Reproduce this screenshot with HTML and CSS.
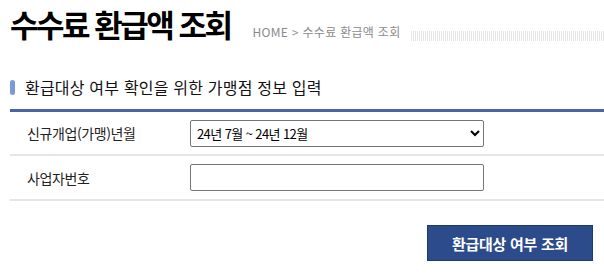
FILE: index.html
```html
<!DOCTYPE html>
<html lang="ko">
<head>
<meta charset="utf-8">
<link rel="stylesheet" href="styles.css">
</head>
<body>
<div class="page">
  <div class="header">
    <h1 class="title">수수료 환급액 조회</h1>
    <div class="crumb">HOME <span class="sep">&gt;</span> 수수료 환급액 조회</div>
    <div class="stripes"></div>
  </div>
  <h2 class="section"><span class="bar"></span>환급대상 여부 확인을 위한 가맹점 정보 입력</h2>
  <div class="form">
    <div class="row">
      <div class="label">신규개업(가맹)년월</div>
      <div class="field">
        <select class="select">
          <option>24년 7월 ~ 24년 12월</option>
        </select>
      </div>
    </div>
    <div class="row">
      <div class="label">사업자번호</div>
      <div class="field"><input class="input" type="text"></div>
    </div>
  </div>
  <div class="actions">
    <button class="btn" type="button">환급대상 여부 조회</button>
  </div>
</div>
</body>
</html>
```
FILE: styles.css
```css
html, body { margin: 0; padding: 0; background: #fff; }
body { font-family: "Noto Sans CJK KR", "Noto Sans", sans-serif; color: #111; }
.page { padding-left: 10px; width: 594px; }
.header { display: flex; align-items: flex-end; height: 42px; padding-top: 2px; }
.title { margin: 0; font-size: 31px; font-weight: 700; letter-spacing: -2.5px; line-height: 40px; color: #000; }
.crumb { margin-left: 22px; font-size: 12px; color: #8a8a8a; line-height: 14px; padding-bottom: 5px; letter-spacing: 0.3px; white-space: nowrap; }
.crumb .sep { color: #999; }
.stripes { flex: 1; height: 10px; margin-left: 10px; margin-bottom: 3px;
  background: repeating-linear-gradient(90deg, #e6e6e6 0 1px, #fff 1px 2px); }
.section { margin: 35px 0 0; display: flex; align-items: center; font-size: 16px; font-weight: 400; line-height: 16px; letter-spacing: 0.2px; color: #111; height: 16px; }
.bar { width: 5px; height: 15px; border-radius: 3px; background: #7b9ad6; margin-right: 10px; }
.form { margin-top: 14px; border-top: 3px solid #4a64a8; }
.row { display: flex; align-items: center; border-bottom: 2px solid #e5e5e5; height: 42px; }
.row + .row { height: 43px; }
.label { width: 163px; padding-left: 17px; font-size: 14px; letter-spacing: -0.4px; color: #222; }
.field { display: flex; }
.select, .input { box-sizing: border-box; width: 294px; height: 27px; border: 1px solid #767676; border-radius: 2px; background: #fff; font-family: "Noto Sans CJK KR", sans-serif; font-size: 13px; color: #000; }
.select { padding: 0 2px; letter-spacing: -0.6px; }
.input { padding: 0 4px; }
.actions { display: flex; justify-content: flex-end; padding-right: 11px; margin-top: 24px; }
.btn { box-sizing: border-box; width: 166px; height: 36px; background: #2c4b8a; border: 1px solid #1f3773; color: #fff; font-family: "Noto Sans CJK KR", sans-serif; font-size: 15px; font-weight: 700; letter-spacing: -0.3px; padding: 0; }
```
